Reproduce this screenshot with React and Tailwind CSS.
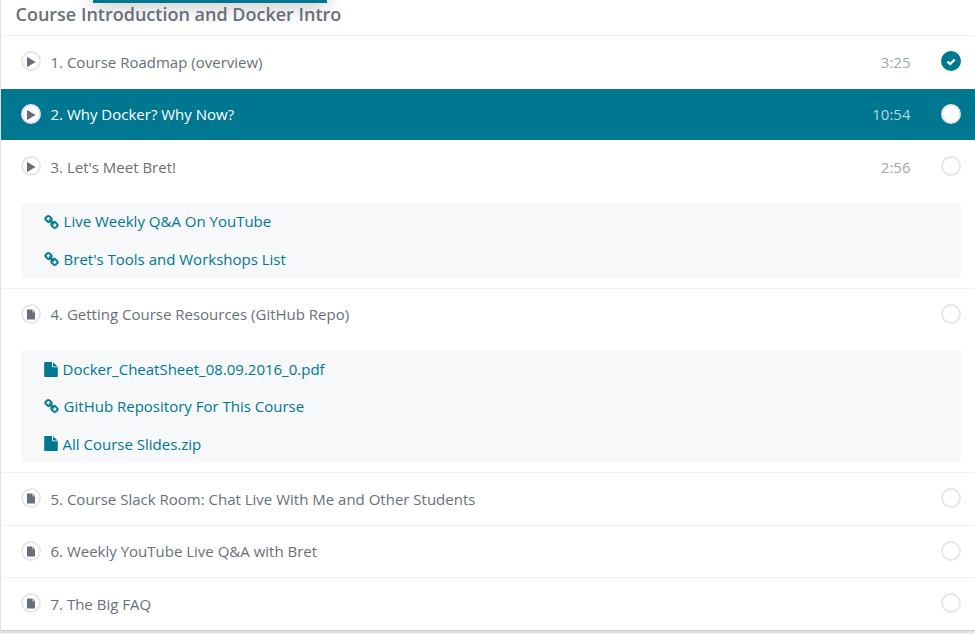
import React from "react";

const lectures = [
  { title: "1. Course Roadmap (overview)", kind: "video", time: "3:25", done: true, size: "h-[53px]", pad: "pt-[15px]", line: "pt-0.5" },
  { title: "2. Why Docker? Why Now?", kind: "video", time: "10:54", active: true, size: "h-[51px]", pad: "pt-[15px]", line: "pt-0" },
  {
    title: "3. Let's Meet Bret!",
    kind: "video",
    time: "2:56",
    size: "h-[149px] border-b",
    pad: "pt-4",
    line: "pt-0.5",
    gap: "mt-[27px]",
    resources: [
      { kind: "link", label: "Live Weekly Q&A On YouTube", row: "h-[38px]", line: "pb-0.5" },
      { kind: "link", label: "Bret's Tools and Workshops List", row: "h-[37px]", line: "pb-0.5" },
    ],
  },
  {
    title: "4. Getting Course Resources (GitHub Repo)",
    kind: "file",
    size: "h-[184px] border-b",
    pad: "pt-[15px]",
    line: "pt-0",
    gap: "mt-[26px]",
    resources: [
      { kind: "file", label: "Docker_CheatSheet_08.09.2016_0.pdf", row: "h-[38px]", line: "pb-0" },
      { kind: "link", label: "GitHub Repository For This Course", row: "h-[37px]", line: "pb-0.5" },
      { kind: "file", label: "All Course Slides.zip", row: "h-[37px]", line: "pb-0" },
    ],
  },
  { title: "5. Course Slack Room: Chat Live With Me and Other Students", kind: "file", size: "h-[53px] border-b", pad: "pt-[15px]", line: "pt-0.5" },
  { title: "6. Weekly YouTube Live Q&A with Bret", kind: "file", size: "h-[52px] border-b", pad: "pt-[15px]", line: "pt-0" },
  { title: "7. The Big FAQ", kind: "file", size: "h-[52px]", pad: "pt-[15px]", line: "pt-0.5" },
];

function LinkIcon() {
  return (
    <svg className="h-[15px] w-[15px] shrink-0" viewBox="0 0 1792 1792" fill="currentColor" stroke="currentColor" strokeWidth="60">
      <path d="M1520 1216q0-40-28-68l-208-208q-28-28-68-28-42 0-72 32 3 3 19 18.5t21.5 21.5 15 19 13 25.5 3.5 27.5q0 40-28 68t-68 28q-15 0-27.5-3.5t-25.5-13-19-15-21.5-21.5-18.5-19q-33 31-33 73 0 40 28 68l206 207q27 27 68 27 40 0 68-26l147-146q28-28 28-67zm-703-705q0-40-28-68l-206-207q-28-28-68-28-39 0-68 27l-147 146q-28 28-28 67 0 40 28 68l208 208q27 27 68 27 42 0 72-31-3-3-19-18.5t-21.5-21.5-15-19-13-25.5-3.5-27.5q0-40 28-68t68-28q15 0 27.5 3.5t25.5 13 19 15 21.5 21.5 18.5 19q33-31 33-73zm895 705q0 120-85 203l-147 146q-83 83-203 83-121 0-204-85l-206-207q-83-83-83-203 0-123 88-209l-88-88q-86 88-208 88-120 0-204-84l-208-208q-84-84-84-204t85-203l147-146q83-83 203-83 121 0 204 85l206 207q83 83 83 203 0 123-88 209l88 88q86-88 208-88 120 0 204 84l208 208q84 84 84 204z" />
    </svg>
  );
}

function FileIcon() {
  return (
    <svg className="h-[15px] w-[14px] shrink-0" viewBox="0 0 14 15" fill="currentColor">
      <path d="M.7 0H8V5.3H13.8V14.3Q13.8 15 13.1 15H.9Q.2 15 .2 14.3V.7Q.2 0 .7 0zM9 .2L13.6 4.5H9z" />
    </svg>
  );
}

function KindBadge({ kind }) {
  return (
    <span className="flex size-5 shrink-0 items-center justify-center rounded-full border-2 border-[#e6e6eb] bg-white text-[#686f7a]">
      <svg className="size-4" viewBox="0 0 16 16" fill="currentColor">
        {kind === "video" ? (
          <path d="M4 4.6Q4 3.8 4.7 4.2L12.1 8.7Q12.5 9 12.1 9.3L4.7 13.8Q4 14.2 4 13.4z" />
        ) : (
          <path d="M4.5 3.5H9.5V6.2H12V12.9Q12 13.5 11.3 13.5H4.7Q4 13.5 4 12.9V4Q4 3.5 4.5 3.5zM10 3.7L11.8 5.8H10z" />
        )}
      </svg>
    </span>
  );
}

function Status({ done }) {
  if (done) {
    return (
      <span className="flex size-5 shrink-0 items-center justify-center rounded-full bg-[#007791]">
        <svg className="size-5" viewBox="0 0 20 20" fill="none" stroke="white" strokeWidth="2.3">
          <path d="M6.5 10.6L9.2 13L13.7 8.6" />
        </svg>
      </span>
    );
  }
  return <span className="size-5 shrink-0 rounded-full border-2 border-[#e6e6eb] bg-white" />;
}

function Lecture({ item }) {
  return (
    <li className={`border-[#f2f3f5] ${item.size} ${item.pad} ${item.active ? "bg-[#007791] text-white" : ""}`}>
      <div className="flex h-5 items-center pr-[14px] pl-5">
        <KindBadge kind={item.kind} />
        <span className={`ml-[9.5px] flex-1 ${item.line}`}>{item.title}</span>
        <span className={`mr-[30.5px] ${item.line} ${item.active ? "text-[#b3d6de]" : "text-[#a1a7b3]"}`}>{item.time}</span>
        <Status done={item.done} />
      </div>
      {item.resources && (
        <ul className={`mr-[14px] ml-5 bg-[#f7f8fa] pl-[23px] text-[#007791] ${item.gap}`}>
          {item.resources.map((r) => (
            <li key={r.label} className={`flex items-center ${r.row}`}>
              {r.kind === "link" ? <LinkIcon /> : <FileIcon />}
              <span className={`ml-[4.6px] ${r.line}`}>{r.label}</span>
            </li>
          ))}
        </ul>
      )}
    </li>
  );
}

export default function App() {
  return (
    <div className="relative h-[634px] w-[975px] overflow-hidden bg-white font-['Open_Sans','Noto_Sans',sans-serif] text-[15px] leading-5 whitespace-nowrap text-[#686f7a]">
      <div className="absolute top-[-40px] left-[93px] h-[43px] w-[234px] bg-[#007791] shadow-[0_5px_20px_rgba(0,0,0,0.2)]" />
      <main className="h-[631px] border-b border-l border-b-[#c8cbd0] border-l-[#dedfe2]">
        <h2 className="relative h-9 border-b border-[#f2f3f5] pt-1 pl-[14.5px] text-[18px] font-semibold">Course Introduction and Docker Intro</h2>
        <ul>
          {lectures.map((item) => (
            <Lecture key={item.title} item={item} />
          ))}
        </ul>
      </main>
      <div className="h-0.5 bg-[#dee0e3]" />
      <div className="h-px bg-[#f3f4f5]" />
    </div>
  );
}
